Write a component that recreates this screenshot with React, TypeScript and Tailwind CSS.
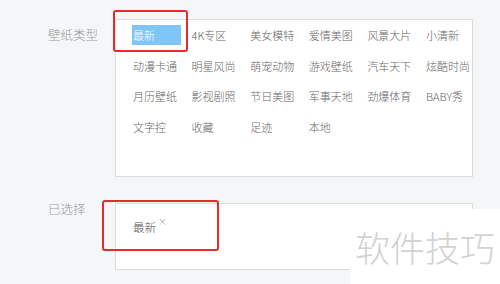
const types = [
  "最新", "4K专区", "美女模特", "爱情美图", "风景大片", "小清新",
  "动漫卡通", "明星风尚", "萌宠动物", "游戏壁纸", "汽车天下", "炫酷时尚",
  "月历壁纸", "影视剧照", "节日美图", "军事天地", "劲爆体育", "BABY秀",
  "文字控", "收藏", "足迹", "本地",
];

export default function App() {
  return (
    <div className="relative w-[500px] h-[284px] overflow-hidden bg-[#f5f6f8] font-['Noto_Sans_CJK_SC','Liberation_Sans',sans-serif]">
      <div className="flex flex-col pt-[19px] gap-[26px]">
        <div className="flex">
          <div className="w-[115px] pl-[48px] pt-[6px] text-[12.5px] leading-[20px] font-light text-[#999]">壁纸类型</div>
          <div className="w-[358px] h-[158px] bg-white border border-[#dcdcdc] pl-[16px] pt-[5px]">
            <div className="grid grid-cols-[repeat(6,58.6px)] gap-y-[10.5px]">
              {types.map((t, i) => (
                <div
                  key={t}
                  className={
                    i === 0
                      ? "w-[49px] h-[20px] pl-[1px] text-[11px] leading-[20px] font-light bg-[#7fc6f6] text-white"
                      : "h-[20px] pl-[1px] text-[11px] leading-[20px] font-light text-[#666] whitespace-nowrap"
                  }
                >
                  {t}
                </div>
              ))}
            </div>
          </div>
        </div>
        <div className="flex">
          <div className="w-[115px] pl-[48px] -mt-[4px] text-[12.5px] leading-[20px] font-light text-[#999]">已选择</div>
          <div className="w-[358px] h-[67px] bg-white border border-[#dcdcdc] pl-[17px] pt-[9px]">
            <span className="text-[11.5px] leading-[20px] font-light text-[#555]">最新</span>
            <span className="relative -top-[7px] ml-[2px] text-[9px] text-[#aaa]">×</span>
          </div>
        </div>
      </div>

      <div className="absolute left-[113px] top-[10px] w-[75px] h-[42px] border-2 border-[#e52b2b] rounded-[3px]" />
      <div className="absolute left-[102px] top-[200px] w-[117px] h-[51px] border-2 border-[#e52b2b] rounded-[3px]" />

      <div className="absolute left-[350px] top-[209px] w-[150px] h-[75px] bg-white flex items-center pl-[5px]">
        <span className="text-[35px] leading-none font-light text-[#d2d2d2]">软件技巧</span>
      </div>
    </div>
  );
}
